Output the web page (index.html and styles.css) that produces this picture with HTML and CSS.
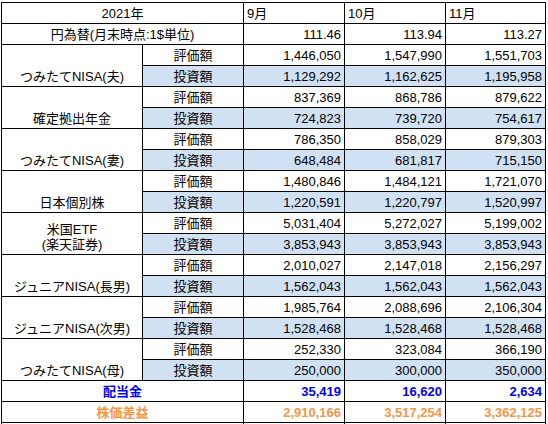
FILE: index.html
```html
<!DOCTYPE html>
<html lang="ja">

<head>
    <meta charset="UTF-8">
    <meta name="viewport" content="width=device-width, initial-scale=1.0">
    <title>資産推移 2021年</title>
    <link rel="stylesheet" href="styles.css">
</head>

<body>
    <div class="sheet">
        <table class="assets">
            <colgroup>
                <col class="col-name">
                <col class="col-type">
                <col class="col-month">
                <col class="col-month">
                <col class="col-last">
            </colgroup>

            <!-- Header -->
            <tr>
                <td colspan="2" class="center">2021年</td>
                <td>9月</td>
                <td>10月</td>
                <td>11月</td>
            </tr>
            <tr>
                <td colspan="2" class="center">円為替(月末時点:1$単位)</td>
                <td class="num">111.46</td>
                <td class="num">113.94</td>
                <td class="num">113.27</td>
            </tr>

            <!-- つみたてNISA(夫) -->
            <tr>
                <td rowspan="2" class="group">つみたてNISA(夫)</td>
                <td class="center">評価額</td>
                <td class="num">1,446,050</td>
                <td class="num">1,547,990</td>
                <td class="num">1,551,703</td>
            </tr>
            <tr class="invest">
                <td class="center">投資額</td>
                <td class="num">1,129,292</td>
                <td class="num">1,162,625</td>
                <td class="num">1,195,958</td>
            </tr>

            <!-- 確定拠出年金 -->
            <tr>
                <td rowspan="2" class="group">確定拠出年金</td>
                <td class="center">評価額</td>
                <td class="num">837,369</td>
                <td class="num">868,786</td>
                <td class="num">879,622</td>
            </tr>
            <tr class="invest">
                <td class="center">投資額</td>
                <td class="num">724,823</td>
                <td class="num">739,720</td>
                <td class="num">754,617</td>
            </tr>

            <!-- つみたてNISA(妻) -->
            <tr>
                <td rowspan="2" class="group">つみたてNISA(妻)</td>
                <td class="center">評価額</td>
                <td class="num">786,350</td>
                <td class="num">858,029</td>
                <td class="num">879,303</td>
            </tr>
            <tr class="invest">
                <td class="center">投資額</td>
                <td class="num">648,484</td>
                <td class="num">681,817</td>
                <td class="num">715,150</td>
            </tr>

            <!-- 日本個別株 -->
            <tr>
                <td rowspan="2" class="group">日本個別株</td>
                <td class="center">評価額</td>
                <td class="num">1,480,846</td>
                <td class="num">1,484,121</td>
                <td class="num">1,721,070</td>
            </tr>
            <tr class="invest">
                <td class="center">投資額</td>
                <td class="num">1,220,591</td>
                <td class="num">1,220,797</td>
                <td class="num">1,520,997</td>
            </tr>

            <!-- 米国ETF -->
            <tr>
                <td rowspan="2" class="group">米国ETF<br>(楽天証券)</td>
                <td class="center">評価額</td>
                <td class="num">5,031,404</td>
                <td class="num">5,272,027</td>
                <td class="num">5,199,002</td>
            </tr>
            <tr class="invest">
                <td class="center">投資額</td>
                <td class="num">3,853,943</td>
                <td class="num">3,853,943</td>
                <td class="num">3,853,943</td>
            </tr>

            <!-- ジュニアNISA(長男) -->
            <tr>
                <td rowspan="2" class="group">ジュニアNISA(長男)</td>
                <td class="center">評価額</td>
                <td class="num">2,010,027</td>
                <td class="num">2,147,018</td>
                <td class="num">2,156,297</td>
            </tr>
            <tr class="invest">
                <td class="center">投資額</td>
                <td class="num">1,562,043</td>
                <td class="num">1,562,043</td>
                <td class="num">1,562,043</td>
            </tr>

            <!-- ジュニアNISA(次男) -->
            <tr>
                <td rowspan="2" class="group">ジュニアNISA(次男)</td>
                <td class="center">評価額</td>
                <td class="num">1,985,764</td>
                <td class="num">2,088,696</td>
                <td class="num">2,106,304</td>
            </tr>
            <tr class="invest">
                <td class="center">投資額</td>
                <td class="num">1,528,468</td>
                <td class="num">1,528,468</td>
                <td class="num">1,528,468</td>
            </tr>

            <!-- つみたてNISA(母) -->
            <tr>
                <td rowspan="2" class="group">つみたてNISA(母)</td>
                <td class="center">評価額</td>
                <td class="num">252,330</td>
                <td class="num">323,084</td>
                <td class="num">366,190</td>
            </tr>
            <tr class="invest">
                <td class="center">投資額</td>
                <td class="num">250,000</td>
                <td class="num">300,000</td>
                <td class="num">350,000</td>
            </tr>

            <!-- Totals -->
            <tr class="dividend">
                <td colspan="2" class="center">配当金</td>
                <td class="num">35,419</td>
                <td class="num">16,620</td>
                <td class="num">2,634</td>
            </tr>
            <tr class="gain">
                <td colspan="2" class="center">株価差益</td>
                <td class="num">2,910,166</td>
                <td class="num">3,517,254</td>
                <td class="num">3,362,125</td>
            </tr>
            <tr>
                <td colspan="2"></td>
                <td></td>
                <td></td>
                <td></td>
            </tr>
        </table>
    </div>
</body>

</html>
```

FILE: styles.css
```css
body {
    margin: 0;
    font-family: "Liberation Sans", "Noto Sans CJK JP", sans-serif;
    font-size: 13px;
    color: #000;
    background-color: #fff;
}

.sheet {
    padding: 2px 0 0 1px;
}

.assets {
    border-collapse: collapse;
    table-layout: fixed;
    width: 545px;
}

.col-name {
    width: 141px;
}

.col-type,
.col-month {
    width: 101px;
}

.col-last {
    width: 100px;
}

.assets tr {
    height: 21px;
}

.assets td {
    border: 1px solid #000;
    padding: 0 3px 2px;
    line-height: 15px;
    vertical-align: bottom;
    white-space: nowrap;
    overflow: hidden;
}

.center {
    text-align: center;
}

.num {
    text-align: right;
}

.group {
    text-align: center;
    background-color: #fff;
}

.invest td {
    background-color: #d0e1f3;
}

.invest td.group {
    background-color: #fff;
}

.dividend td {
    color: #0000ff;
    font-weight: bold;
}

.gain td {
    color: #f79646;
    font-weight: bold;
}
```
